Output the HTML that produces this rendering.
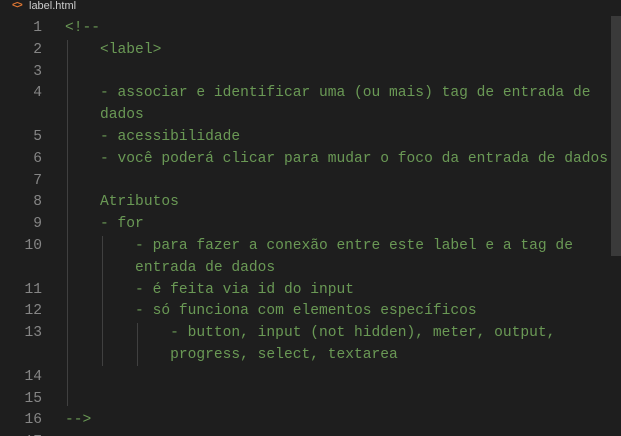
<!DOCTYPE html><html style="width:621px;height:436px;overflow:hidden"><head><style>
body{margin:0;width:621px;height:436px;background:#1e1e1e;overflow:hidden;position:relative;font-family:"Liberation Mono",monospace;}
.hdr{position:absolute;left:0;top:0;width:621px;height:14px;background:#1e1e1e;font:11px "Liberation Sans",sans-serif;color:#ccc;}
.hdr .ic{position:absolute;left:12px;top:0;color:#e37933;font-size:10px;font-weight:bold;letter-spacing:-1px}
.hdr .n{position:absolute;left:29px;top:0;line-height:13px}
.r{position:absolute;left:0;height:22px;line-height:22px;font-size:14.6px;white-space:pre;color:#6a9955}
.ln{position:absolute;width:42px;text-align:right;color:#858585;left:0}
.c{position:absolute;left:65px}
.g{position:absolute;width:1px;background:#404040}
.sb{position:absolute;left:611px;top:16px;width:10px;height:240px;background:#3a3a3a}
</style></head><body>
<div class="hdr"><span class="ic">&lt;&gt;</span><span class="n">label.html</span></div>
<div class="sb"></div>
<div class="g" style="left:67px;top:40px;height:366px"></div>
<div class="g" style="left:102px;top:236px;height:130px"></div>
<div class="g" style="left:137px;top:323px;height:43px"></div>
<div class="r" style="top:17px"><span class="ln">1</span><span class="c">&lt;!--</span></div>
<div class="r" style="top:39px"><span class="ln">2</span><span class="c">    &lt;label&gt;</span></div>
<div class="r" style="top:61px"><span class="ln">3</span></div>
<div class="r" style="top:82px"><span class="ln">4</span><span class="c">    - associar e identificar uma (ou mais) tag de entrada de</span></div>
<div class="r" style="top:104px"><span class="c">    dados</span></div>
<div class="r" style="top:126px"><span class="ln">5</span><span class="c">    - acessibilidade</span></div>
<div class="r" style="top:148px"><span class="ln">6</span><span class="c">    - você poderá clicar para mudar o foco da entrada de dados</span></div>
<div class="r" style="top:170px"><span class="ln">7</span></div>
<div class="r" style="top:191px"><span class="ln">8</span><span class="c">    Atributos</span></div>
<div class="r" style="top:213px"><span class="ln">9</span><span class="c">    - for</span></div>
<div class="r" style="top:235px"><span class="ln">10</span><span class="c">        - para fazer a conexão entre este label e a tag de</span></div>
<div class="r" style="top:257px"><span class="c">        entrada de dados</span></div>
<div class="r" style="top:279px"><span class="ln">11</span><span class="c">        - é feita via id do input</span></div>
<div class="r" style="top:300px"><span class="ln">12</span><span class="c">        - só funciona com elementos específicos</span></div>
<div class="r" style="top:322px"><span class="ln">13</span><span class="c">            - button, input (not hidden), meter, output,</span></div>
<div class="r" style="top:344px"><span class="c">            progress, select, textarea</span></div>
<div class="r" style="top:366px"><span class="ln">14</span></div>
<div class="r" style="top:388px"><span class="ln">15</span></div>
<div class="r" style="top:409px"><span class="ln">16</span><span class="c">--&gt;</span></div>
<div class="r" style="top:431px"><span class="ln">17</span></div>
</body></html>
